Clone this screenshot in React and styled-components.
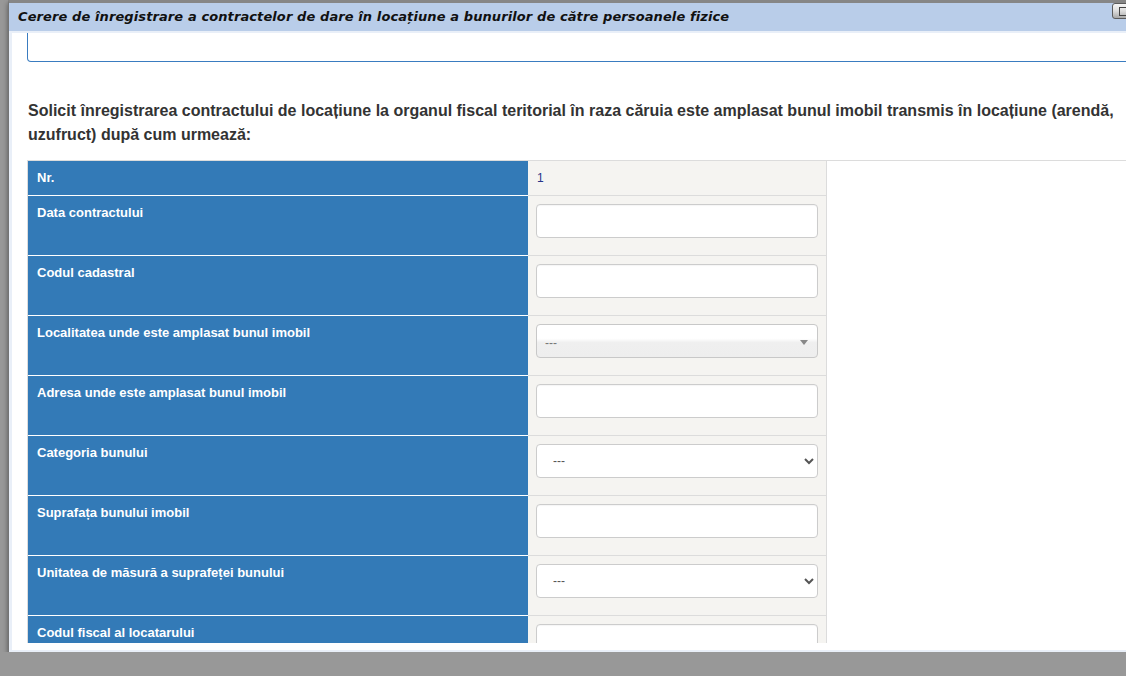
import React from 'react';
import styled, { createGlobalStyle } from 'styled-components';

const GlobalStyle = createGlobalStyle`
  html, body {
    margin: 0;
    padding: 0;
    overflow: hidden;
    background: #989898;
  }
  body {
    font-family: "Liberation Sans", Arial, sans-serif;
  }
`;

const Dialog = styled.div`
  position: relative;
  width: 1140px;
  margin-left: 8px;
  border-top: 3px solid #868686;
  border-left: 1px solid #747474;
  background: #e9eff8;
  box-shadow: 0 3px 5px rgba(0, 0, 0, 0.45);
  display: flex;
  flex-direction: column;
`;

const TitleBar = styled.div`
  position: relative;
  height: 28px;
  padding-left: 9px;
  background: #b9cde9;
  color: #111;
  font-family: "DejaVu Sans", Verdana, sans-serif;
  font-size: 13px;
  font-weight: bold;
  font-style: italic;
  letter-spacing: 0.1px;
  line-height: 28px;
  white-space: nowrap;
`;

const CloseButton = styled.span`
  position: absolute;
  top: 0;
  left: 1103px;
  width: 22px;
  height: 16px;
  box-sizing: border-box;
  border: 1px solid #5c5c5c;
  border-radius: 3px;
  background: linear-gradient(to bottom, #f6f6f6 0%, #dcdcdc 50%, #a9a9a9 100%);
  &::after {
    content: "";
    position: absolute;
    left: 6px;
    top: 3px;
    width: 6px;
    height: 7px;
    border: 1px solid #444;
  }
`;

const Frame = styled.div`
  padding: 2px 0 2px 3px;
`;

const Content = styled.div`
  height: 617px;
  box-sizing: border-box;
  padding-bottom: 7px;
  background: #fff;
`;

const Viewport = styled.div`
  height: 100%;
  overflow: hidden;
  padding-left: 15px;
`;

const TopBox = styled.div`
  height: 28px;
  margin-right: -20px;
  border: 1px solid #3a7cc0;
  border-top: none;
  border-radius: 0 0 0 4px;
`;

const Lead = styled.p`
  width: 1092px;
  margin: 37px 0 13px 1px;
  color: #333;
  font-size: 16px;
  font-weight: bold;
  line-height: 24px;
`;

const TableFrame = styled.div`
  border-top: 1px solid #dcdcdc;
`;

const Grid = styled.table`
  width: 800px;
  border-collapse: separate;
  border-spacing: 0;
  border-left: 1px solid #dcdcdc;
  border-right: 1px solid #dcdcdc;
`;

const LabelCell = styled.td`
  width: 482px;
  padding: 8px 9px;
  background: #337ab7;
  border-bottom: 1px solid #fff;
  color: #fff;
  font-size: 13px;
  font-weight: bold;
  line-height: 18px;
  vertical-align: top;
`;

const ValueCell = styled.td`
  padding: 8px;
  background: #f5f4f1;
  border-bottom: 1px solid #dcdcdc;
  vertical-align: top;
  font-size: 12px;
  line-height: 18px;
`;

const Number = styled.span`
  padding-left: 1px;
  color: #28348a;
`;

const TextInput = styled.input`
  display: block;
  width: 282px;
  height: 34px;
  margin: 0 0 9px;
  box-sizing: border-box;
  border: 1px solid #ccc;
  border-radius: 4px;
  background: #fff;
  box-shadow: inset 0 1px 1px rgba(0, 0, 0, 0.04);
`;

const NativeSelect = styled.select`
  display: block;
  width: 282px;
  height: 34px;
  margin: 0 0 9px;
  padding: 0 8px 0 12px;
  box-sizing: border-box;
  border: 1px solid #ccc;
  border-radius: 4px;
  background: #fff;
  color: #555;
  font-family: "Liberation Sans", Arial, sans-serif;
  font-size: 12px;
`;

const ComboBox = styled.div`
  position: relative;
  width: 282px;
  height: 34px;
  margin: 0 0 9px;
  box-sizing: border-box;
  padding: 6px 0 0 8px;
  border: 1px solid #c8c8c8;
  border-radius: 4px;
  background: linear-gradient(to bottom, #fff 0%, #fff 42%, #efefef 55%, #eee 100%);
  color: #777;
  font-size: 12px;
  line-height: 24px;
  &::after {
    content: "";
    position: absolute;
    right: 9px;
    top: 15px;
    border-top: 5px solid #888;
    border-left: 4px solid transparent;
    border-right: 4px solid transparent;
  }
`;

const rows = [
  { label: 'Data contractului', kind: 'input' },
  { label: 'Codul cadastral', kind: 'input' },
  { label: 'Localitatea unde este amplasat bunul imobil', kind: 'combo' },
  { label: 'Adresa unde este amplasat bunul imobil', kind: 'input' },
  { label: 'Categoria bunului', kind: 'select' },
  { label: 'Suprafața bunului imobil', kind: 'input' },
  { label: 'Unitatea de măsură a suprafeței bunului', kind: 'select' },
  { label: 'Codul fiscal al locatarului', kind: 'input' },
];

const Field = ({ kind }) => {
  if (kind === 'combo') return <ComboBox>---</ComboBox>;
  if (kind === 'select') {
    return (
      <NativeSelect defaultValue="">
        <option value="">---</option>
      </NativeSelect>
    );
  }
  return <TextInput type="text" />;
};

const App = () => {
  return (
    <>
      <GlobalStyle />
      <Dialog>
        <TitleBar>
          Cerere de înregistrare a contractelor de dare în locațiune a bunurilor de către persoanele fizice
          <CloseButton />
        </TitleBar>
        <Frame>
          <Content>
            <Viewport>
              <TopBox />
              <Lead>
                Solicit înregistrarea contractului de locațiune la organul fiscal teritorial în raza căruia este
                amplasat bunul imobil transmis în locațiune (arendă, uzufruct) după cum urmează:
              </Lead>
              <TableFrame>
                <Grid>
                  <tbody>
                    <tr>
                      <LabelCell>Nr.</LabelCell>
                      <ValueCell>
                        <Number>1</Number>
                      </ValueCell>
                    </tr>
                    {rows.map((row) => (
                      <tr key={row.label}>
                        <LabelCell>{row.label}</LabelCell>
                        <ValueCell>
                          <Field kind={row.kind} />
                        </ValueCell>
                      </tr>
                    ))}
                  </tbody>
                </Grid>
              </TableFrame>
            </Viewport>
          </Content>
        </Frame>
      </Dialog>
    </>
  );
};

export default App;
